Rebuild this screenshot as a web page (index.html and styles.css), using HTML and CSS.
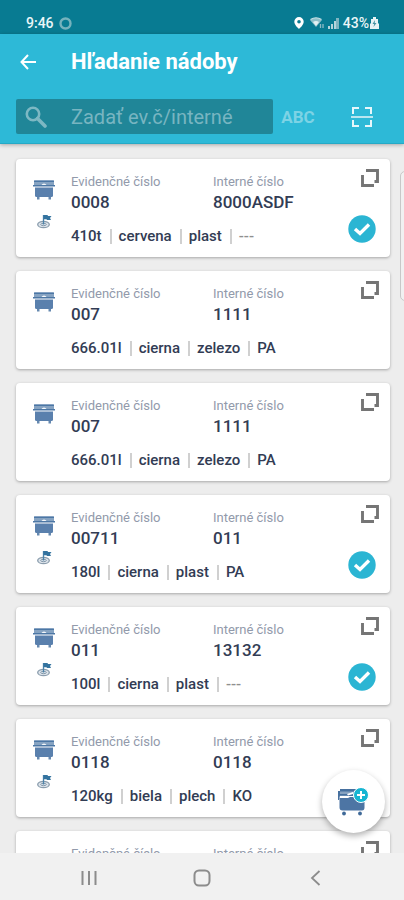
FILE: index.html
```
<!DOCTYPE html>
<html lang="sk">
<head>
<meta charset="utf-8">
<meta name="viewport" content="width=device-width, initial-scale=1">
<title>Hľadanie nádoby</title>
<link rel="stylesheet" href="styles.css">
</head>
<body>
<svg class="sprite" aria-hidden="true">
  <symbol id="bin" viewBox="0 0 22 20">
    <path fill="#86a3c2" d="M1 1.500Q1 .5 2 .5H20Q21 .5 21 1.500V6H1Z"/>
    <path fill="#4c77a5" d="M1 .5H21V2H1ZM0 5H7.500L9 4H13L14.500 5H22V6.500H0Z"/>
    <path fill="#f4f7fa" d="M8 5Q11 2 14 5Z"/>
    <path fill="#5a80ad" d="M2 7.500H20V15.500Q20 17 18.500 17H3.500Q2 17 2 15.500Z"/>
    <path fill="#6689b0" d="M4 17H6.500V19.500H4ZM15.500 17H18V19.500H15.500Z"/>
  </symbol>
  <symbol id="flag" viewBox="0 0 15 15">
    <ellipse cx="6.500" cy="10.500" rx="5.800" ry="3.200" fill="#dce3ea" stroke="#8b9dad" stroke-width="1.300"/>
    <ellipse cx="6.500" cy="10.500" rx="2.800" ry="1.200" fill="none" stroke="#8296a9"/>
    <path d="M6.500 1V10.500" stroke="#4b83aa" stroke-width="1.300"/>
    <path fill="#34739f" d="M6.500 1H10.500L11 2H14.500L13 4L14 6H10L9.500 5.200H6.500Z"/>
  </symbol>
  <symbol id="copy" viewBox="0 0 18 18">
    <path d="M5 1.500H16.500V12.500H13.500M1.500 6V16.500H13" fill="none" stroke="#757575" stroke-width="2.900"/>
  </symbol>
  <symbol id="check" viewBox="0 0 28 28">
    <circle cx="14" cy="14" r="13.700" fill="#2bb5d3"/>
    <path d="M7 14L12 18.500L21 9.500" fill="none" stroke="#fff" stroke-width="3.400"/>
  </symbol>
</svg>

<div class="app">
  <div class="status">
    <span class="status-side">9:46
      <svg width="13" height="13" viewBox="0 0 13 13"><circle cx="6.500" cy="6.500" r="5" fill="none" stroke="#75b2bd" stroke-width="2.400"/></svg>
    </span>
    <span class="status-side status-right">
      <svg width="10" height="12" viewBox="0 0 10 12"><path fill="#fff" fill-rule="evenodd" d="M5 0A4.700 4.700 0 0 0 .3 4.700C.3 8 5 12 5 12S9.700 8 9.700 4.700A4.700 4.700 0 0 0 5 0ZM5 3A1.800 1.800 0 1 1 5 6.600A1.800 1.800 0 0 1 5 3Z"/></svg>
      <svg class="wifi" width="14" height="12" viewBox="0 0 14 12"><path fill="#8fc0ca" d="M0 3Q6 -1.500 12 3L6 10Z"/><path fill="none" stroke="#c5dfe4" stroke-width="1.200" d="M.5 2.500Q6 -1 11.500 2.500"/><path fill="#e3f1f3" d="M3 5Q6 3 9 5L6 9Z"/><path stroke="#8cbac6" stroke-width="1.300" d="M10.500 7V11M13 7V11"/></svg>
      <svg width="11" height="12" viewBox="0 0 11 12"><path fill="#b5d5dc" d="M0 9H2V12H0ZM3 7H5V12H3ZM6 4H8V12H6Z"/><path fill="#7fb5c1" d="M8 1H11V12H8Z"/></svg>
      <span class="battery">43%</span>
      <svg width="9" height="12" viewBox="0 0 9 12"><path fill="#e7f3f5" d="M3 0H6V2H8V6L9 7V12H0V7L1 6V2H3Z"/><path fill="#4593a3" d="M5 3L2.500 7H4.200L3.500 10L6.500 6H4.700Z"/></svg>
    </span>
  </div>

  <header class="header">
    <div class="title-row">
      <button class="icon-button back" aria-label="Späť">
        <svg width="16" height="16" viewBox="0 0 16 16"><path d="M8 1L1.500 8L8 15M1.500 8H16" fill="none" stroke="#fff" stroke-width="2"/></svg>
      </button>
      <h1>Hľadanie nádoby</h1>
    </div>
    <div class="search-row">
      <label class="search">
        <svg width="22" height="22" viewBox="0 0 22 22"><circle cx="8" cy="8" r="6.200" fill="none" stroke="#7db8c3" stroke-width="2.600"/><path d="M12.500 12.500L20 20" stroke="#7db8c3" stroke-width="3.600" stroke-linecap="round"/></svg>
        <input type="text" placeholder="Zadať ev.č/interné" aria-label="Zadať ev.č/interné">
      </label>
      <button class="abc">ABC</button>
      <button class="icon-button scan" aria-label="Skenovať">
        <svg width="22" height="20" viewBox="0 0 22 20"><path d="M2 7V1H8M14 1H20V7M20 13V19H14M8 19H2V13" fill="none" stroke="#e6f7fb" stroke-width="2"/><path d="M0 10H22" stroke="#b9e6f0" stroke-width="2"/></svg>
      </button>
    </div>
  </header>

  <main class="list">
    <article class="card">
      <div class="marks"><svg class="bin"><use href="#bin"/></svg><svg class="flag"><use href="#flag"/></svg></div>
      <dl><div><dt>Evidenčné číslo</dt><dd>0008</dd></div><div><dt>Interné číslo</dt><dd>8000ASDF</dd></div></dl>
      <ul class="meta"><li>410t</li><li>cervena</li><li>plast</li><li class="none">---</li></ul>
      <div class="actions"><button class="icon-button" aria-label="Otvoriť"><svg class="copy"><use href="#copy"/></svg></button><svg class="check"><use href="#check"/></svg></div>
    </article>
    <article class="card">
      <div class="marks"><svg class="bin"><use href="#bin"/></svg></div>
      <dl><div><dt>Evidenčné číslo</dt><dd>007</dd></div><div><dt>Interné číslo</dt><dd>1111</dd></div></dl>
      <ul class="meta"><li>666.01l</li><li>cierna</li><li>zelezo</li><li>PA</li></ul>
      <div class="actions"><button class="icon-button" aria-label="Otvoriť"><svg class="copy"><use href="#copy"/></svg></button></div>
    </article>
    <article class="card">
      <div class="marks"><svg class="bin"><use href="#bin"/></svg></div>
      <dl><div><dt>Evidenčné číslo</dt><dd>007</dd></div><div><dt>Interné číslo</dt><dd>1111</dd></div></dl>
      <ul class="meta"><li>666.01l</li><li>cierna</li><li>zelezo</li><li>PA</li></ul>
      <div class="actions"><button class="icon-button" aria-label="Otvoriť"><svg class="copy"><use href="#copy"/></svg></button></div>
    </article>
    <article class="card">
      <div class="marks"><svg class="bin"><use href="#bin"/></svg><svg class="flag"><use href="#flag"/></svg></div>
      <dl><div><dt>Evidenčné číslo</dt><dd>00711</dd></div><div><dt>Interné číslo</dt><dd>011</dd></div></dl>
      <ul class="meta"><li>180l</li><li>cierna</li><li>plast</li><li>PA</li></ul>
      <div class="actions"><button class="icon-button" aria-label="Otvoriť"><svg class="copy"><use href="#copy"/></svg></button><svg class="check"><use href="#check"/></svg></div>
    </article>
    <article class="card">
      <div class="marks"><svg class="bin"><use href="#bin"/></svg><svg class="flag"><use href="#flag"/></svg></div>
      <dl><div><dt>Evidenčné číslo</dt><dd>011</dd></div><div><dt>Interné číslo</dt><dd>13132</dd></div></dl>
      <ul class="meta"><li>100l</li><li>cierna</li><li>plast</li><li class="none">---</li></ul>
      <div class="actions"><button class="icon-button" aria-label="Otvoriť"><svg class="copy"><use href="#copy"/></svg></button><svg class="check"><use href="#check"/></svg></div>
    </article>
    <article class="card">
      <div class="marks"><svg class="bin"><use href="#bin"/></svg><svg class="flag"><use href="#flag"/></svg></div>
      <dl><div><dt>Evidenčné číslo</dt><dd>0118</dd></div><div><dt>Interné číslo</dt><dd>0118</dd></div></dl>
      <ul class="meta"><li>120kg</li><li>biela</li><li>plech</li><li>KO</li></ul>
      <div class="actions"><button class="icon-button" aria-label="Otvoriť"><svg class="copy"><use href="#copy"/></svg></button></div>
    </article>
    <article class="card">
      <div class="marks"></div>
      <dl><div><dt>Evidenčné číslo</dt><dd></dd></div><div><dt>Interné číslo</dt><dd></dd></div></dl>
      <div class="actions"><button class="icon-button" aria-label="Otvoriť"><svg class="copy"><use href="#copy"/></svg></button></div>
    </article>
  </main>

  <nav class="navbar">
    <button class="icon-button" aria-label="Posledné aplikácie"><svg width="16" height="16" viewBox="0 0 16 16"><path d="M1.500 1V15M8 1V15M14.500 1V15" stroke="#8c8c8c" stroke-width="2"/></svg></button>
    <button class="icon-button" aria-label="Domov"><svg width="18" height="18" viewBox="0 0 18 18"><rect x="1.500" y="1.500" width="15" height="15" rx="4.500" fill="none" stroke="#8c8c8c" stroke-width="2"/></svg></button>
    <button class="icon-button" aria-label="Naspäť"><svg width="16" height="16" viewBox="0 0 16 16"><path d="M12.500 1L5 8L12.500 15" fill="none" stroke="#8c8c8c" stroke-width="1.800"/></svg></button>
  </nav>

  <div class="edge-handle"></div>
  <button class="fab" aria-label="Pridať nádobu">
    <svg width="32" height="28" viewBox="0 0 32 28">
      <path fill="#87a2c0" d="M2 2H17V8H2Z"/>
      <path fill="#46709f" d="M2 1H18V3.500H2ZM0 9V3H2V6H11L13 5H17V8H11L9 7.500H2L1 12H0Z"/>
      <path fill="#fff" d="M9 6L15 4V6L10 7.500Z"/>
      <path fill="#4d75a4" d="M1.500 10H10L12 9H24Q26.500 9 26.500 12V19.500Q26.500 22.500 24 22.500H4.500Q1.500 22.500 1.500 19.500Z"/>
      <circle cx="6" cy="25.500" r="1.900" fill="#3f6998"/><circle cx="22" cy="25.500" r="1.900" fill="#3f6998"/>
      <circle cx="23" cy="7" r="7.500" fill="#17b5d2" stroke="#fff"/>
      <path d="M23 3V11M19 7H27" stroke="#fff" stroke-width="2"/>
    </svg>
  </button>
</div>
</body>
</html>
```
FILE: styles.css
```
* {
  box-sizing: border-box;
  margin: 0;
  padding: 0;
}

body {
  font-family: Roboto, "Liberation Sans", sans-serif;
  color: #323c54;
  background: #ededed;
}

button {
  border: 0;
  background: none;
  font: inherit;
}

svg {
  display: block;
  flex: none;
}

.sprite {
  position: absolute;
  width: 0;
  height: 0;
}

.icon-button {
  display: flex;
  align-items: center;
  justify-content: center;
}

.app {
  position: relative;
  display: flex;
  flex-direction: column;
  height: 100vh;
  overflow: hidden;
}

.status {
  display: flex;
  justify-content: space-between;
  align-items: flex-end;
  flex: none;
  height: 34px;
  padding: 0 25px 2px 26px;
  background: #087b92;
  color: #eaf6f8;
  font-size: 14px;
  font-weight: 500;
  line-height: 18px;
}

.status-side {
  display: flex;
  align-items: center;
  gap: 5px;
}

.status-right {
  gap: 4px;
}

.wifi {
  margin-left: 2px;
}

.battery {
  margin-right: -3px;
}

.header {
  flex: none;
  background: #2db9d7;
  border-bottom: 1px solid #25a9c6;
  padding: 0 16px 9px;
  box-shadow: 0 1px 4px rgba(0, 0, 0, 0.3);
  z-index: 1;
}

.title-row {
  display: flex;
  align-items: center;
  height: 56px;
  padding-left: 4px;
}

.back {
  width: 16px;
  height: 40px;
}

h1 {
  margin-left: 35px;
  color: #fff;
  font-size: 22px;
  font-weight: 700;
  line-height: 28px;
}

.search-row {
  display: flex;
  align-items: center;
  margin-top: 9px;
}

.search {
  display: flex;
  align-items: center;
  flex: 1;
  min-width: 0;
  height: 35px;
  padding-left: 9px;
  gap: 24px;
  border-radius: 2px;
  background: #208698;
}

.search input {
  flex: 1;
  min-width: 0;
  border: 0;
  outline: 0;
  background: none;
  color: #fff;
  font: 400 20px/24px Roboto, sans-serif;
}

.search input::placeholder {
  color: #78b5c1;
  opacity: 1;
}

.abc {
  width: 50px;
  color: #7dd3e5;
  font-size: 17px;
  font-weight: 700;
  line-height: 24px;
}

.scan {
  width: 65px;
  height: 35px;
  padding-left: 13px;
}

.list {
  display: flex;
  flex-direction: column;
  flex: 1;
  min-height: 0;
  gap: 14px;
  padding: 15px 14px 0 16px;
  overflow: hidden;
}

.card {
  display: grid;
  grid-template-columns: 55px minmax(0, 1fr) 42px;
  grid-template-rows: 52px 20px;
  flex: none;
  height: 98px;
  padding-top: 15px;
  border-radius: 4px;
  background: #fff;
  box-shadow: 0 1px 3px rgba(0, 0, 0, 0.3);
}

.marks {
  grid-row: 1 / 3;
  display: flex;
  flex-direction: column;
  align-items: center;
  gap: 14px;
  width: 22px;
  margin-left: 17px;
  padding-top: 6px;
}

.bin {
  width: 22px;
  height: 20px;
}

.flag {
  width: 15px;
  height: 15px;
}

dl {
  display: flex;
}

dl div {
  flex: 0 0 142px;
}

dt {
  color: #929aab;
  font-size: 13px;
  line-height: 16px;
  white-space: nowrap;
}

dd {
  font-size: 17px;
  font-weight: 500;
  line-height: 24px;
}

.meta {
  grid-column: 2;
  grid-row: 2;
  display: flex;
  align-items: center;
  list-style: none;
  font-size: 15px;
  font-weight: 500;
  line-height: 15px;
}

.meta li + li {
  margin-left: 8px;
  padding-left: 7px;
  border-left: 2px solid #d0d0d0;
}

.meta .none {
  color: #8f8f8f;
}

.actions {
  grid-column: 3;
  grid-row: 1 / 3;
  display: flex;
  flex-direction: column;
  gap: 28px;
  margin-top: -5px;
}

.actions .icon-button {
  align-self: flex-end;
  margin-right: 11px;
}

.copy {
  width: 18px;
  height: 18px;
}

.check {
  width: 28px;
  height: 28px;
}

.navbar {
  display: flex;
  align-items: center;
  justify-content: center;
  gap: 65px;
  flex: none;
  height: 47px;
  padding-top: 2px;
  background: #f1f1f1;
  z-index: 1;
}

.navbar .icon-button {
  width: 48px;
  height: 40px;
}

.edge-handle {
  position: absolute;
  top: 171px;
  right: -8px;
  width: 12px;
  height: 130px;
  border: 1px solid #c8c8c8;
  border-radius: 5px;
  background: #f1f1f1;
}

.fab {
  position: absolute;
  right: 19px;
  bottom: 67px;
  display: flex;
  align-items: center;
  justify-content: center;
  width: 63px;
  height: 63px;
  border-radius: 50%;
  background: #fff;
  box-shadow: 0 3px 6px rgba(0, 0, 0, 0.3);
}
```
